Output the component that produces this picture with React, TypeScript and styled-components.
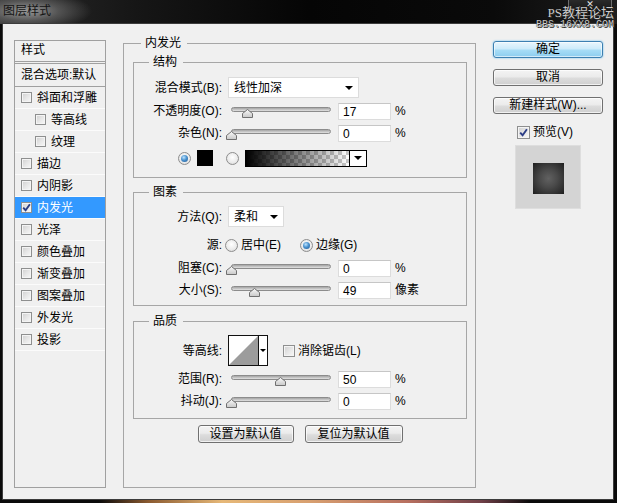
import React from "react";
import styled, { createGlobalStyle } from "styled-components";

const FONT = `"Liberation Sans", "Noto Sans CJK SC", "Noto Sans CJK JP", sans-serif`;

const GlobalStyle = createGlobalStyle`
  html, body { margin: 0; padding: 0; background: #000; }
  body { font-family: ${FONT}; font-size: 12px; }
  *, *::before, *::after { box-sizing: border-box; }
`;

const Window = styled.div`
  position: relative;
  width: 617px;
  height: 503px;
  display: flex;
  flex-direction: column;
  overflow: hidden;
  font-family: ${FONT};
  font-size: 12px;
  line-height: 14px;
  color: #000;
  background:
    linear-gradient(90deg, rgba(0,0,0,0) 16%, #8a5a30 24%, #e6b878 36%, #d8a070 50%, #b87060 66%, #704048 78%, rgba(0,0,0,0) 86%) left bottom / 100% 3px no-repeat,
    #0a0a0a;
`;

const TitleBar = styled.div`
  height: 24px;
  flex: none;
  display: flex;
  justify-content: space-between;
  align-items: flex-start;
  background:
    radial-gradient(ellipse 66px 20px at 26px 11px, rgba(160,160,160,0.95) 0%, rgba(115,115,115,0.6) 50%, rgba(60,60,60,0) 100%),
    linear-gradient(90deg, #2a2a2a 0%, #161616 22%, #050505 50%, #0a0a0a 80%, #1e1e1e 100%);
`;

const TitleText = styled.div`
  padding: 4px 0 0 3px;
  color: #141414;
  font-size: 12px;
  line-height: 14px;
`;

const CloseButton = styled.div`
  width: 44px;
  height: 16px;
  margin-right: 5px;
  border: 1px solid rgba(200, 200, 200, 0.45);
  border-top: none;
  border-radius: 0 0 4px 4px;
  background: linear-gradient(#2a2a2a, #111);
  color: #e8e8e8;
  font: bold 9px/8px "DejaVu Sans", sans-serif;
  text-align: center;
`;

const Watermark = styled.div`
  position: absolute;
  top: 5px;
  right: 3px;
  display: flex;
  flex-direction: column;
  align-items: flex-end;
  color: #cccccc;
  text-shadow: 0 0 1px #000, 1px 1px 0 #333;
  pointer-events: none;
`;

const WatermarkTitle = styled.span`
  font: 13px/15px "Liberation Serif", "Noto Sans CJK SC", serif;
`;

const WatermarkUrl = styled.span`
  font: 10px/10px "Liberation Mono", monospace;
`;

const Body = styled.div`
  flex: 1;
  margin: 0 4px 4px 3px;
  padding: 0 0 11px 11px;
  background: #f0f0f0;
  box-shadow: 0 0 0 1px #3c3c3c;
  display: flex;
  align-items: stretch;
`;

/* ---------- left list ---------- */

const StyleList = styled.div`
  flex: none;
  width: 92px;
  margin-top: 16px;
  border: 1px solid #a0a0a0;
  display: flex;
  flex-direction: column;
`;

const ListHeader = styled.div`
  height: 21px;
  padding: 2px 0 0 6px;
  border-bottom: 1px solid #a0a0a0;
  margin-bottom: 1px;
`;

const BlendRow = styled.div`
  height: 24px;
  padding: 4px 0 0 6px;
  border-top: 1px solid #a0a0a0;
  border-bottom: 1px solid #a0a0a0;
  white-space: nowrap;
`;

const ListItem = styled.div<{ $indent: number; $selected?: boolean }>`
  height: 22px;
  display: flex;
  align-items: center;
  padding-left: ${(p) => p.$indent}px;
  border-bottom: 1px solid #fbfbfb;
  background: ${(p) => (p.$selected ? "#3399ff" : "transparent")};
  color: ${(p) => (p.$selected ? "#fff" : "#000")};
  gap: 5px;
`;

const CheckBox = styled.span<{ $size: number }>`
  flex: none;
  position: relative;
  display: inline-flex;
  align-items: center;
  justify-content: center;
  width: ${(p) => p.$size}px;
  height: ${(p) => p.$size}px;
  border: 1px solid #8e8f8f;
  background: linear-gradient(135deg, #cfcfcf 0%, #e6e6e6 50%, #f8f8f8 100%);
  box-shadow: inset 0 0 0 1px #f4f4f4;
`;

const CheckMark = styled.svg`
  width: 9px;
  height: 9px;
`;

function Check({ size, checked }: { size: number; checked?: boolean }) {
  return (
    <CheckBox $size={size}>
      {checked && (
        <CheckMark viewBox="0 0 9 9">
          <path d="M1.2 4.6 L3.6 7.2 L7.9 1.3" fill="none" stroke="#2b3d86" strokeWidth="1.9" />
        </CheckMark>
      )}
    </CheckBox>
  );
}

/* ---------- group boxes ---------- */

const Group = styled.fieldset<{ $mt: number; $pad: string }>`
  margin: ${(p) => p.$mt}px 0 0 0;
  min-width: 0;
  padding: ${(p) => p.$pad};
  border: 1px solid #a6a6a6;
`;

const OuterGroup = styled(Group)`
  flex: none;
  width: 353px;
  margin-left: 17px;
  display: block;
`;

const Legend = styled.legend<{ $indent: number }>`
  margin-left: ${(p) => p.$indent}px;
  padding: 0 6px 0 4px;
  font-size: 12px;
  line-height: 14px;
`;

const Row = styled.div<{ $h: number; $mt: number; $pl?: number }>`
  display: flex;
  align-items: center;
  height: ${(p) => p.$h}px;
  margin-top: ${(p) => p.$mt}px;
  padding-left: ${(p) => p.$pl ?? 0}px;
  white-space: nowrap;
`;

const FieldLabel = styled.span`
  flex: none;
  width: 88px;
  text-align: right;
`;

const Select = styled.div<{ $w: number }>`
  flex: none;
  width: ${(p) => p.$w}px;
  height: 21px;
  margin-left: 6px;
  display: flex;
  align-items: center;
  justify-content: space-between;
  padding: 0 5px 0 5px;
  background: #fff;
  border: 1px solid #dcdcdc;
`;

const Caret = styled.span`
  width: 0;
  height: 0;
  border-left: 4px solid transparent;
  border-right: 4px solid transparent;
  border-top: 4px solid #000;
`;

const SliderBox = styled.div`
  position: relative;
  flex: none;
  width: 109px;
  height: 20px;
  margin-left: 4px;
`;

const SliderTrack = styled.div`
  margin: 6px 4px 0 5px;
  height: 5px;
  border-radius: 3px;
  border: 1px solid #8c8c8c;
  background: linear-gradient(#a4a4a4, #e2e2e2);
`;

const SliderThumb = styled.svg`
  position: absolute;
  top: 8px;
  width: 11px;
  height: 9px;
`;

function Slider({ pct }: { pct: number }) {
  const left = 5 + (pct * 99) / 100 - 5.5;
  return (
    <SliderBox>
      <SliderTrack />
      <SliderThumb viewBox="0 0 11 9" style={{ left: `${left}px` }}>
        <defs>
          <linearGradient id="thumbg" x1="0" y1="0" x2="0" y2="1">
            <stop offset="0" stopColor="#fafafa" />
            <stop offset="1" stopColor="#c8c8c8" />
          </linearGradient>
        </defs>
        <polygon points="5.5,0.5 10.5,4.5 10.5,8.5 0.5,8.5 0.5,4.5" fill="url(#thumbg)" stroke="#707070" strokeWidth="1" />
      </SliderThumb>
    </SliderBox>
  );
}

const NumberBox = styled.div`
  flex: none;
  width: 53px;
  height: 17px;
  margin-left: 3px;
  padding: 1px 0 0 4px;
  line-height: 14px;
  background: #fff;
  border: 1px solid #dcdcdc;
  border-top-color: #c6c6c6;
`;

const Unit = styled.span`
  margin-left: 4px;
`;

const RadioCircle = styled.span<{ $ml: number }>`
  flex: none;
  display: inline-flex;
  align-items: center;
  justify-content: center;
  width: 13px;
  height: 13px;
  margin-left: ${(p) => p.$ml}px;
  border-radius: 50%;
  border: 1px solid #8d8d8d;
  background: radial-gradient(circle at 50% 40%, #ffffff 0%, #eaeaea 60%, #cfcfcf 100%);
`;

const RadioDot = styled.span`
  width: 7px;
  height: 7px;
  border-radius: 50%;
  background: radial-gradient(circle at 40% 35%, #bfe4ff 0%, #4b93cf 45%, #1d5490 100%);
`;

function Radio({ checked, ml }: { checked?: boolean; ml: number }) {
  return <RadioCircle $ml={ml}>{checked && <RadioDot />}</RadioCircle>;
}

const RadioOption = styled.span<{ $w: number }>`
  display: inline-flex;
  align-items: center;
  width: ${(p) => p.$w}px;
  gap: 3px;
`;

const Swatch = styled.span`
  flex: none;
  width: 16px;
  height: 16px;
  margin-left: 6px;
  background: #000;
`;

const GradientPicker = styled.div`
  flex: none;
  display: flex;
  width: 122px;
  height: 17px;
  margin-left: 6px;
  border: 1px solid #000;
  background: #fff;
`;

const GradientStrip = styled.div`
  flex: 1;
  background:
    linear-gradient(90deg, rgba(0,0,0,1) 0%, rgba(0,0,0,0) 100%),
    repeating-conic-gradient(#c8c8c8 0% 25%, #ffffff 0% 50%) 0 0 / 8px 8px;
`;

const PickerArrow = styled.div`
  flex: none;
  width: 17px;
  display: flex;
  align-items: center;
  justify-content: center;
  border-left: 1px solid #000;
  background: #fff;
`;

const ContourPicker = styled.div`
  flex: none;
  display: flex;
  width: 40px;
  height: 31px;
  margin-left: 6px;
  border: 1px solid #111;
  background: #fff;
`;

const ContourCurve = styled.svg`
  flex: none;
  width: 29px;
  height: 29px;
`;

const ContourArrow = styled.div`
  flex: 1;
  display: flex;
  align-items: center;
  justify-content: center;
  border-left: 1px solid #111;
`;

const SmallCaret = styled.span`
  width: 0;
  height: 0;
  border-left: 3px solid transparent;
  border-right: 3px solid transparent;
  border-top: 3px solid #000;
`;

const CheckLabel = styled.span<{ $ml: number }>`
  display: inline-flex;
  align-items: center;
  gap: 3px;
  margin-left: ${(p) => p.$ml}px;
`;

const ButtonRow = styled.div`
  display: flex;
  justify-content: center;
  gap: 11px;
  margin-top: 6px;
`;

const DialogButton = styled.div<{ $w: number; $h: number; $primary?: boolean }>`
  flex: none;
  width: ${(p) => p.$w}px;
  height: ${(p) => p.$h}px;
  line-height: ${(p) => p.$h - 2}px;
  text-align: center;
  border-radius: 3px;
  border: 1px solid ${(p) => (p.$primary ? "#3c7fb1" : "#707070")};
  background: ${(p) =>
    p.$primary
      ? "linear-gradient(#e9f6fd 0%, #cdebfa 45%, #a6dcf6 55%, #8ccdef 100%)"
      : "linear-gradient(#f4f4f4 0%, #ebebeb 45%, #dcdcdc 55%, #cfcfcf 100%)"};
  box-shadow: ${(p) =>
    p.$primary
      ? "inset 0 0 0 1px rgba(255,255,255,0.6), 0 0 2px #5cbcf0"
      : "inset 0 0 0 1px rgba(255,255,255,0.7)"};
  white-space: nowrap;
`;

/* ---------- right column ---------- */

const SideColumn = styled.div`
  flex: none;
  width: 110px;
  margin: 17px 0 0 17px;
  display: flex;
  flex-direction: column;
  align-items: center;
  gap: 11px;
`;

const PreviewToggle = styled.div`
  display: flex;
  align-items: center;
  gap: 3px;
  margin-left: -6px;
`;

const PreviewBox = styled.div`
  width: 66px;
  height: 64px;
  margin-top: -5px;
  display: flex;
  align-items: center;
  justify-content: center;
  background: #d4d4d4;
  border: 1px solid #dedede;
`;

const PreviewSquare = styled.div`
  width: 31px;
  height: 31px;
  margin-top: 2px;
  background: radial-gradient(circle at 50% 50%, #616161 0%, #4a4a4a 40%, #2a2a2a 85%, #1c1c1c 100%);
`;

const listItems: { label: string; indent: number; selected?: boolean; checked?: boolean }[] = [
  { label: "斜面和浮雕", indent: 6 },
  { label: "等高线", indent: 20 },
  { label: "纹理", indent: 20 },
  { label: "描边", indent: 6 },
  { label: "内阴影", indent: 6 },
  { label: "内发光", indent: 6, selected: true, checked: true },
  { label: "光泽", indent: 6 },
  { label: "颜色叠加", indent: 6 },
  { label: "渐变叠加", indent: 6 },
  { label: "图案叠加", indent: 6 },
  { label: "外发光", indent: 6 },
  { label: "投影", indent: 6 },
];

function SliderRow({ label, pct, value, unit, mt }: { label: string; pct: number; value: string; unit: string; mt: number }) {
  return (
    <Row $h={20} $mt={mt}>
      <FieldLabel>{label}</FieldLabel>
      <Slider pct={pct} />
      <NumberBox>{value}</NumberBox>
      <Unit>{unit}</Unit>
    </Row>
  );
}

export default function App() {
  return (
    <>
      <GlobalStyle />
      <Window>
        <TitleBar>
          <TitleText>图层样式</TitleText>
          <CloseButton>✕</CloseButton>
        </TitleBar>
        <Body>
          <StyleList>
            <ListHeader>样式</ListHeader>
            <BlendRow>混合选项:默认</BlendRow>
            {listItems.map((it) => (
              <ListItem key={it.label} $indent={it.indent} $selected={it.selected}>
                <Check size={11} checked={it.checked} />
                <span>{it.label}</span>
              </ListItem>
            ))}
          </StyleList>

          <OuterGroup $mt={12} $pad="5px 8px 0 9px">
            <Legend $indent={8}>内发光</Legend>

            <Group $mt={0} $pad="0 0 9px 0">
              <Legend $indent={15}>结构</Legend>
              <Row $h={21} $mt={8}>
                <FieldLabel>混合模式(B):</FieldLabel>
                <Select $w={131}>
                  <span>线性加深</span>
                  <Caret />
                </Select>
              </Row>
              <SliderRow label="不透明度(O):" pct={17} value="17" unit="%" mt={3} />
              <SliderRow label="杂色(N):" pct={0} value="0" unit="%" mt={2} />
              <Row $h={20} $mt={5} $pl={44}>
                <Radio checked ml={0} />
                <Swatch />
                <Radio ml={13} />
                <GradientPicker>
                  <GradientStrip />
                  <PickerArrow>
                    <Caret />
                  </PickerArrow>
                </GradientPicker>
              </Row>
            </Group>

            <Group $mt={7} $pad="0 0 5px 0">
              <Legend $indent={15}>图素</Legend>
              <Row $h={21} $mt={7}>
                <FieldLabel>方法(Q):</FieldLabel>
                <Select $w={56}>
                  <span>柔和</span>
                  <Caret />
                </Select>
              </Row>
              <Row $h={20} $mt={8}>
                <FieldLabel>源:</FieldLabel>
                <RadioOption $w={78}>
                  <Radio ml={3} />
                  <span>居中(E)</span>
                </RadioOption>
                <RadioOption $w={80}>
                  <Radio checked ml={0} />
                  <span>边缘(G)</span>
                </RadioOption>
              </Row>
              <SliderRow label="阻塞(C):" pct={0} value="0" unit="%" mt={3} />
              <SliderRow label="大小(S):" pct={24} value="49" unit="像素" mt={2} />
            </Group>

            <Group $mt={8} $pad="0 0 7px 0">
              <Legend $indent={15}>品质</Legend>
              <Row $h={31} $mt={7}>
                <FieldLabel>等高线:</FieldLabel>
                <ContourPicker>
                  <ContourCurve viewBox="0 0 29 29">
                    <polygon points="0,29 29,0 29,29" fill="#9c9c9c" />
                  </ContourCurve>
                  <ContourArrow>
                    <SmallCaret />
                  </ContourArrow>
                </ContourPicker>
                <CheckLabel $ml={15}>
                  <Check size={12} />
                  <span>消除锯齿(L)</span>
                </CheckLabel>
              </Row>
              <SliderRow label="范围(R):" pct={50} value="50" unit="%" mt={3} />
              <SliderRow label="抖动(J):" pct={0} value="0" unit="%" mt={2} />
            </Group>

            <ButtonRow>
              <DialogButton $w={96} $h={18}>设置为默认值</DialogButton>
              <DialogButton $w={98} $h={18}>复位为默认值</DialogButton>
            </ButtonRow>
          </OuterGroup>

          <SideColumn>
            <DialogButton $w={110} $h={17} $primary>确定</DialogButton>
            <DialogButton $w={110} $h={17}>取消</DialogButton>
            <DialogButton $w={110} $h={17}>新建样式(W)...</DialogButton>
            <PreviewToggle>
              <Check size={13} checked />
              <span>预览(V)</span>
            </PreviewToggle>
            <PreviewBox>
              <PreviewSquare />
            </PreviewBox>
          </SideColumn>
        </Body>
        <Watermark>
          <WatermarkTitle>PS教程论坛</WatermarkTitle>
          <WatermarkUrl>BBS.16XX8.COM</WatermarkUrl>
        </Watermark>
      </Window>
    </>
  );
}
